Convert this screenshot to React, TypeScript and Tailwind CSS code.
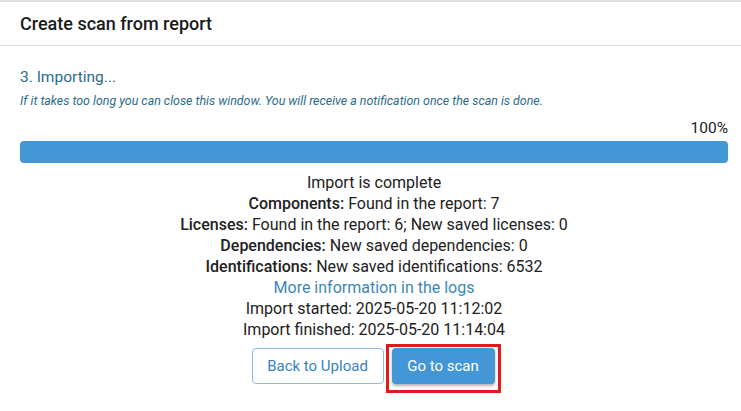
export default function App() {
  return (
    <div className="h-[411px] w-[741px] bg-white text-[#212121]" style={{ fontFamily: 'Roboto, "Liberation Sans", sans-serif' }}>
      <div className="border-t-2 border-b border-[#e0e0e0] pl-5 pr-[13px] h-[46px] flex items-center">
        <h1 className="text-[18px] font-medium text-[#1a1a1a]">Create scan from report</h1>
      </div>
      <div className="pl-5 pr-[13px] pt-[21px]">
        <div className="text-[15.5px] leading-5 text-[#2b6c86]">3. Importing...</div>
        <div className="mt-[6px] text-[12.4px] italic leading-4 text-[#2b6c86]">
          If it takes too long you can close this window. You will receive a notification once the scan is done.
        </div>
        <div className="mt-[11px] text-right text-[15.5px] leading-4">100%</div>
        <div className="mt-[5px] h-[22px] w-full rounded-[4px] bg-[#4497d6]" />
        <div className="mt-[9px] flex flex-col items-center text-[16px] leading-[21px]">
          <div>Import is complete</div>
          <div><span className="font-medium">Components:</span> Found in the report: 7</div>
          <div><span className="font-medium">Licenses:</span> Found in the report: 6; New saved licenses: 0</div>
          <div><span className="font-medium">Dependencies:</span> New saved dependencies: 0</div>
          <div><span className="font-medium">Identifications:</span> New saved identifications: 6532</div>
          <div className="text-[#3d87b5]">More information in the logs</div>
          <div>Import started: 2025-05-20 11:12:02</div>
          <div>Import finished: 2025-05-20 11:14:04</div>
          <div className="ml-[4px] mt-[4px] flex items-start gap-[2px]">
            <button className="mt-[4px] h-[36px] w-[132px] rounded-[4px] border border-[#8dbbe3] bg-white text-[15px] text-[#3a82c4]">
              Back to Upload
            </button>
            <div className="border-[3px] border-[#e01b1b] px-[3px] pt-[1px] pb-[6px]">
              <button className="h-[36px] w-[103px] rounded-[4px] bg-[#4497d6] text-[15px] text-white shadow-[0_2px_3px_rgba(0,0,0,0.3)]">
                Go to scan
              </button>
            </div>
          </div>
        </div>
      </div>
    </div>
  );
}
